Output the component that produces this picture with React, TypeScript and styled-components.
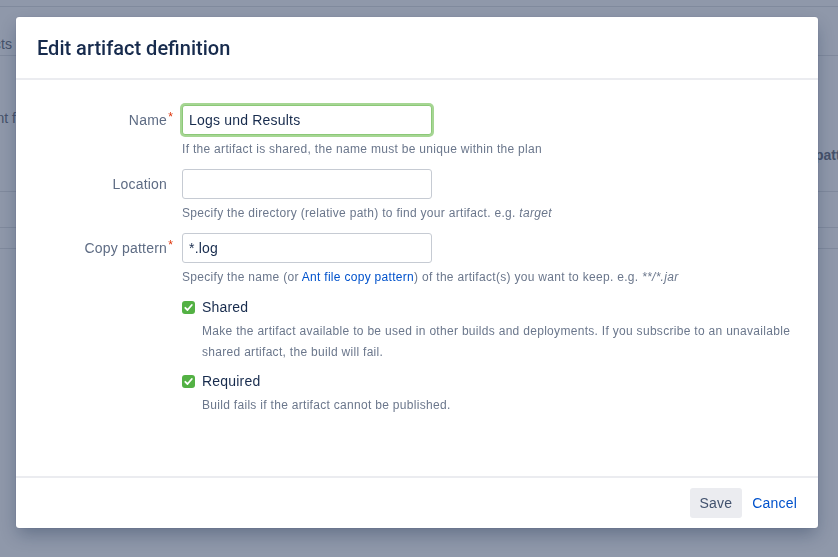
import React from 'react';
import styled, { createGlobalStyle } from 'styled-components';

const GlobalStyle = createGlobalStyle`
    html, body {
        margin: 0;
        padding: 0;
        width: 838px;
        height: 557px;
        overflow: hidden;
        background: #8f98aa;
        font-family: 'Liberation Sans', Arial, sans-serif;
    }
`;

type Field = {
    label: string;
    required?: boolean;
    value: string;
    focused?: boolean;
    help: React.ReactNode;
};

const options = [
    {
        label: 'Shared',
        description:
            'Make the artifact available to be used in other builds and deployments. If you subscribe to an unavailable shared artifact, the build will fail.',
    },
    {
        label: 'Required',
        description: 'Build fails if the artifact cannot be published.',
    },
];

function CheckIcon() {
    return (
        <svg width="13" height="13" viewBox="0 0 13 13">
            <rect x="0" y="0" width="13" height="13" rx="3" fill="#53b144" />
            <path
                d="M3.3 6.8 L5.5 9 L9.8 4"
                fill="none"
                stroke="#fff"
                strokeWidth="1.8"
                strokeLinecap="round"
                strokeLinejoin="round"
            />
        </svg>
    );
}

function App() {
    const fields: Field[] = [
        {
            label: 'Name',
            required: true,
            value: 'Logs und Results',
            focused: true,
            help: 'If the artifact is shared, the name must be unique within the plan',
        },
        {
            label: 'Location',
            value: '',
            help: (
                <>
                    Specify the directory (relative path) to find your artifact. e.g. <em>target</em>
                </>
            ),
        },
        {
            label: 'Copy pattern',
            required: true,
            value: '*.log',
            help: (
                <>
                    Specify the name (or <HelpLink href="#">Ant file copy pattern</HelpLink>) of the
                    artifact(s) you want to keep. e.g. <em>**/*.jar</em>
                </>
            ),
        },
    ];

    return (
        <>
            <GlobalStyle />
            <Page>
                <TopStrip />
                <PageRow $height={48}>
                    <LeftClip $pad={28} $inset={4}>Artifacts</LeftClip>
                    <div />
                    <RightClip $pad={0} />
                </PageRow>
                <PageRow $height={135}>
                    <LeftClip $pad={53} $inset={0}>Artifact content f</LeftClip>
                    <div />
                    <RightClip $pad={90}>pattern</RightClip>
                </PageRow>
                <PageRow $height={35} />
                <PageRow $height={20} />
            </Page>

            <Overlay>
                <Modal>
                    <Header>
                        <Title>Edit artifact definition</Title>
                    </Header>
                    <Body>
                        <Form>
                            {fields.map((f) => (
                                <React.Fragment key={f.label}>
                                    <Label>
                                        {f.label}
                                        {f.required && <Asterisk>*</Asterisk>}
                                    </Label>
                                    <FieldCell>
                                        <Input defaultValue={f.value} $focused={!!f.focused} />
                                        <Help>{f.help}</Help>
                                    </FieldCell>
                                </React.Fragment>
                            ))}
                            <div />
                            <Options>
                                {options.map((o) => (
                                    <Option key={o.label}>
                                        <CheckRow>
                                            <CheckIcon />
                                            <span>{o.label}</span>
                                        </CheckRow>
                                        <OptionText>{o.description}</OptionText>
                                    </Option>
                                ))}
                            </Options>
                        </Form>
                    </Body>
                    <Footer>
                        <SaveButton>Save</SaveButton>
                        <CancelButton>Cancel</CancelButton>
                    </Footer>
                </Modal>
            </Overlay>
        </>
    );
}

export default App;

const Page = styled.div`
    display: flex;
    flex-direction: column;
    width: 838px;
    height: 557px;
    background: #8f98aa;
    color: #46526b;
    font-size: 14px;
    font-weight: 700;
`;

const TopStrip = styled.div`
    height: 6px;
    border-bottom: 1px solid #808a9d;
`;

const PageRow = styled.div<{ $height?: number }>`
    display: grid;
    grid-template-columns: 16px 1fr 20px;
    height: ${(p) => p.$height ?? 20}px;
    border-bottom: 1px solid #808a9d;
`;

const LeftClip = styled.div<{ $pad: number; $inset: number }>`
    display: flex;
    justify-content: flex-end;
    overflow: hidden;
    white-space: nowrap;
    padding-top: ${(p) => p.$pad}px;
    padding-right: ${(p) => p.$inset}px;
    font-weight: 400;
    line-height: 18px;
`;

const RightClip = styled.div<{ $pad: number }>`
    display: flex;
    justify-content: flex-start;
    overflow: hidden;
    white-space: nowrap;
    padding-top: ${(p) => p.$pad}px;
    line-height: 18px;
    margin-left: -3px;
`;

const Overlay = styled.div`
    position: fixed;
    inset: 0;
    display: flex;
    align-items: flex-start;
    justify-content: flex-start;
    padding: 17px 0 0 16px;
`;

const Modal = styled.div`
    display: flex;
    flex-direction: column;
    width: 802px;
    height: 511px;
    background: #fff;
    border-radius: 3px;
    box-shadow: 0 0 1px rgba(9, 30, 66, 0.31), 0 8px 18px -2px rgba(9, 30, 66, 0.32);
    font-family: 'Liberation Sans', Arial, sans-serif;
    letter-spacing: 0.2px;
`;

const Header = styled.div`
    display: flex;
    align-items: center;
    height: 61px;
    padding: 0 21px;
    border-bottom: 2px solid #ebecf0;
`;

const Title = styled.h2`
    margin: 0;
    font-family: Roboto, 'Liberation Sans', sans-serif;
    font-size: 20px;
    font-weight: 500;
    letter-spacing: 0;
    color: #172b4d;
`;

const Body = styled.div`
    flex: 1;
    padding: 25px 16px 0 0;
`;

const Form = styled.div`
    display: grid;
    grid-template-columns: 151px 1fr;
    column-gap: 15px;
    row-gap: 12px;
    align-items: start;
`;

const Label = styled.label`
    position: relative;
    text-align: right;
    line-height: 30px;
    font-size: 14px;
    color: #5e6c84;
`;

const Asterisk = styled.span`
    position: absolute;
    top: -3px;
    right: -6px;
    color: #de350b;
    font-size: 12px;
`;

const FieldCell = styled.div`
    display: flex;
    flex-direction: column;
    gap: 6px;
`;

const Input = styled.input<{ $focused: boolean }>`
    box-sizing: border-box;
    width: 250px;
    height: 30px;
    padding: 0 6px;
    border-radius: 3px;
    border: 1px solid ${(p) => (p.$focused ? '#8cc878' : '#c6cbd3')};
    box-shadow: ${(p) => (p.$focused ? '0 0 0 2px #a6d693' : 'none')};
    font-family: inherit;
    font-size: 14px;
    letter-spacing: 0.2px;
    color: #172b4d;
    background: #fff;
    outline: none;
`;

const Help = styled.div`
    font-size: 12px;
    line-height: 16px;
    letter-spacing: 0.3px;
    color: #6b778c;

    em {
        font-style: italic;
    }
`;

const HelpLink = styled.a`
    color: #0052cc;
    text-decoration: none;
`;

const Options = styled.div`
    display: flex;
    flex-direction: column;
    gap: 8px;
`;

const Option = styled.div`
    display: flex;
    flex-direction: column;
`;

const CheckRow = styled.div`
    display: flex;
    align-items: center;
    gap: 7px;
    height: 20px;
    font-size: 14px;
    color: #172b4d;
`;

const OptionText = styled.p`
    margin: 4px 0 0 20px;
    font-size: 12px;
    line-height: 21px;
    letter-spacing: 0.3px;
    color: #6b778c;
`;

const Footer = styled.div`
    display: flex;
    justify-content: flex-end;
    align-items: center;
    gap: 10px;
    height: 50px;
    padding: 0 21px;
    border-top: 2px solid #ebecf0;
`;

const SaveButton = styled.button`
    height: 30px;
    padding: 0 10px;
    border: none;
    border-radius: 3px;
    background: #ebecf0;
    color: #42526e;
    font-family: inherit;
    font-size: 14px;
    letter-spacing: 0.2px;
`;

const CancelButton = styled.button`
    padding: 0;
    border: none;
    background: none;
    color: #0052cc;
    font-family: inherit;
    font-size: 14px;
    letter-spacing: 0.2px;
`;
